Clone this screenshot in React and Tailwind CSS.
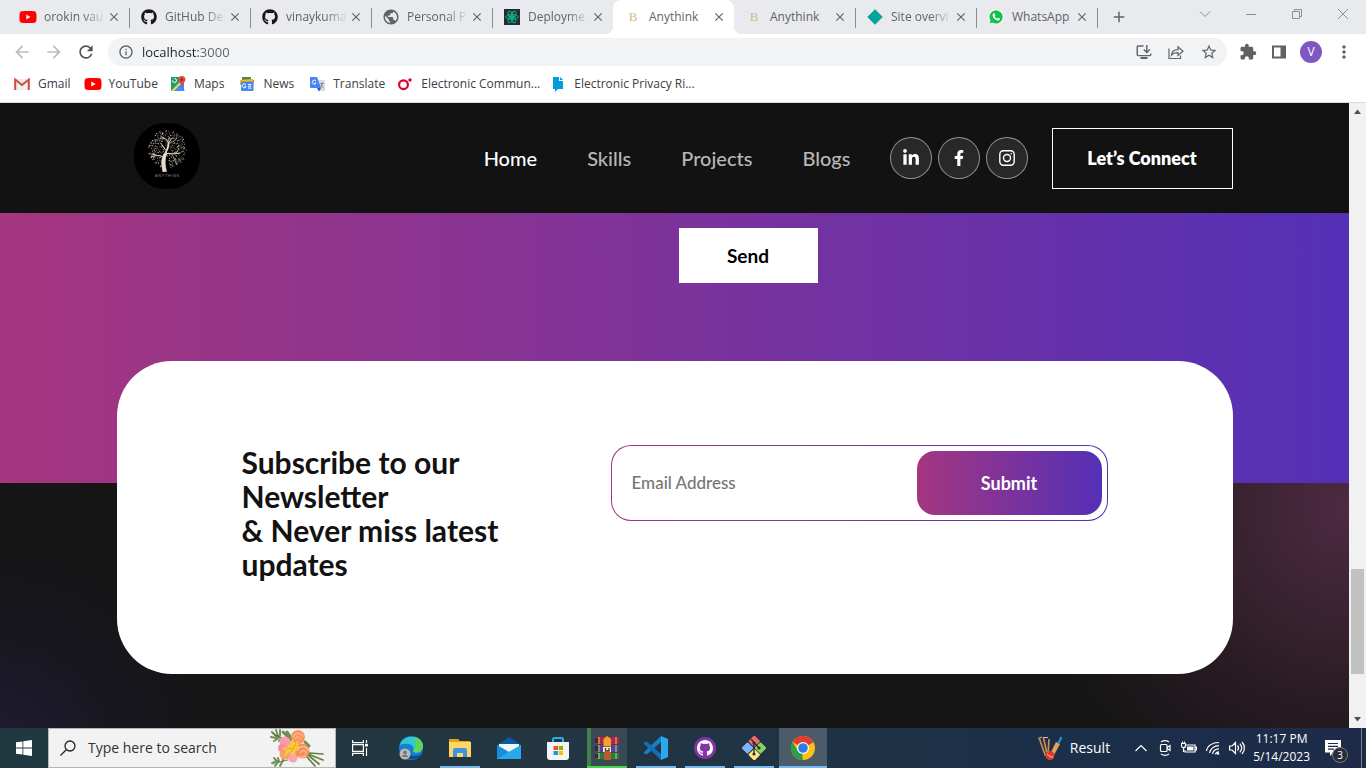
import React from "react";
import { FaYoutube, FaGithub, FaFacebookF, FaLinkedinIn, FaWhatsapp } from "react-icons/fa";
import { MdArrowBack, MdArrowForward, MdRefresh, MdInfoOutline, MdPublic, MdExtension, MdStarBorder, MdClose, MdAdd, MdMoreVert } from "react-icons/md";

const YouTube = () => <FaYoutube className="size-[18px] shrink-0 text-[#ff0000]" />;
const Octocat = () => <FaGithub className="size-4 text-[#191717]" />;
const Globe = () => <MdPublic className="size-[18px] shrink-0 text-[#5f6368]" />;

const ReactAtom = () => (
  <svg viewBox="0 0 16 16" className="size-4" fill="none" stroke="#10b585" strokeWidth="0.9">
    <rect width="16" height="16" fill="#222b38" stroke="none" />
    <ellipse cx="8" cy="8" rx="6.4" ry="2.5" />
    <ellipse cx="8" cy="8" rx="6.4" ry="2.5" transform="rotate(60 8 8)" />
    <ellipse cx="8" cy="8" rx="6.4" ry="2.5" transform="rotate(120 8 8)" />
    <circle cx="8" cy="8" r="1.5" fill="#10b585" />
  </svg>
);
const LetterB = () => <span className="w-4 text-center font-['Liberation_Serif',serif] text-[13px] leading-4 text-[#d6b98c]">B</span>;
const Diamond = () => (
  <svg viewBox="0 0 16 16" className="size-4"><path d="M8 .3 15.7 8 8 15.7.3 8z" fill="#05a39c" /></svg>
);
const WhatsApp = () => (
  <svg viewBox="0 0 16 16" className="size-4">
    <path d="M.3 15.700 1.400 11.700A7.600 7.600 0 1 1 4.300 14.600z" fill="#fff" />
    <path d="M1.500 14.500 2.400 11.400A6.600 6.600 0 1 1 4.600 13.600z" fill="#10c34b" />
    <path d="M5.600 4.400c.4-.3.900-.2 1.100.2l.6 1.400c.1.300 0 .5-.7 1.200.6 1.200 1.400 1.900 2.600 2.400.6-.8.800-1 1.100-.9l1.500.7c.3.200.3.500.2.900-.4 1.100-1.700 1.400-2.700 1.100C7 10.600 5.400 9 4.700 7c-.4-1.100.100-2.200.9-2.600z" fill="#fff" />
  </svg>
);

const tabs = [
  { title: "orokin vau", icon: YouTube, sep: true, fade: true },
  { title: "GitHub De", icon: Octocat, sep: true, fade: true },
  { title: "vinaykuma", icon: Octocat, sep: true, fade: true },
  { title: "Personal P", icon: Globe, sep: true, fade: true },
  { title: "Deployme", icon: ReactAtom, fade: true },
  { title: "Anythink", icon: LetterB, active: true },
  { title: "Anythink", icon: LetterB, sep: true },
  { title: "Site overvi", icon: Diamond, sep: true, fade: true },
  { title: "WhatsApp", icon: WhatsApp, sep: true },
];

function Tab({ title, icon: Icon, active, sep, fade }) {
  return (
    <div className={`relative flex h-[34px] w-[121px] min-w-0 items-center pl-3 pr-2 ${active ? "rounded-t-lg bg-white" : ""}`}>
      {active && <span className="absolute -left-2 bottom-0 size-2 bg-[radial-gradient(circle_at_0_0,transparent_8px,#fff_8px)]" />}
      {active && <span className="absolute -right-2 bottom-0 size-2 bg-[radial-gradient(circle_at_100%_0,transparent_8px,#fff_8px)]" />}
      <button className="flex min-w-0 flex-1 items-center gap-2 text-left">
        <span className="flex size-4 shrink-0 items-center justify-center"><Icon /></span>
        <span className={`min-w-0 flex-1 whitespace-nowrap text-[12px] leading-4 text-[#5f6368] ${fade ? "[mask-image:linear-gradient(90deg,#000_62%,transparent_98%)]" : ""}`}>{title}</span>
      </button>
      <button aria-label={`Close ${title}`} className="flex size-[14px] shrink-0 items-center justify-center"><MdClose className="size-[14px] text-[#5f6368]" /></button>
      {sep && <span className="absolute -right-px top-2 h-5 w-px bg-[#8a8d91]" />}
    </div>
  );
}

const line = { fill: "none", stroke: "#8f9195", strokeWidth: 1 };

function TabStrip() {
  return (
    <div className="flex h-[34px] items-start bg-[#e8eaed] pl-2">
      {tabs.map((t, i) => <Tab key={i} {...t} />)}
      <button aria-label="New tab" className="flex h-[34px] w-11 items-center justify-center"><MdAdd className="size-[18px] text-[#5f6368]" /></button>
      <div className="ml-auto flex">
        <button aria-label="Search tabs" className="flex h-7 w-[46px] items-center justify-center"><svg {...line} className="h-3 w-3" viewBox="0 0 12 12"><path d="m1 3.5 5 5 5-5" /></svg></button>
        <button aria-label="Minimize" className="flex h-7 w-[46px] items-center justify-center"><svg {...line} className="h-3 w-3" viewBox="0 0 12 12"><path d="M1 6.5h10" /></svg></button>
        <button aria-label="Restore" className="flex h-7 w-[46px] items-center justify-center"><svg {...line} className="h-3 w-3" viewBox="0 0 12 12"><path d="M1.500 3.500h7v7h-7zM3.500 3.500v-2h7v7h-2" /></svg></button>
        <button aria-label="Close window" className="flex h-7 w-[46px] items-center justify-center"><svg {...line} className="h-3 w-3" viewBox="0 0 12 12"><path d="m1 1 10 10M11 1 1 11" /></svg></button>
      </div>
    </div>
  );
}

function Toolbar() {
  const grey = { fill: "none", stroke: "#5f6368", strokeWidth: 1.4 };
  return (
    <div className="flex h-9 items-center bg-white pl-3 pr-3">
      <button aria-label="Back" className="w-8"><MdArrowBack className="size-5 text-[#b9bcbf]" /></button>
      <button aria-label="Forward" className="w-8"><MdArrowForward className="size-5 text-[#b9bcbf]" /></button>
      <button aria-label="Reload" className="w-8"><MdRefresh className="size-5 text-[#505458]" /></button>
      <div className="flex h-7 flex-1 items-center rounded-full bg-[#f1f3f4] pl-[10px] pr-[9px]">
        <MdInfoOutline className="size-4 text-[#5f6368]" />
        <input aria-label="Address" defaultValue="localhost:3000" className="ml-2 min-w-0 flex-1 bg-[linear-gradient(90deg,#202124_56px,#5f6368_56px)] bg-clip-text text-[13px] leading-5 text-transparent outline-none" />
        <div className="flex gap-4">
          <button aria-label="Install app">
            <svg {...grey} className="size-4" viewBox="0 0 16 16"><path d="M7.500 2H2.200a1 1 0 0 0-1 1v7.600a1 1 0 0 0 1 1h11.600a1 1 0 0 0 1-1V9.500M10.800 1v7.200M7.800 5.500l3 3 3-3" /><path d="M4.500 14h7" strokeWidth="2" /></svg>
          </button>
          <button aria-label="Share">
            <svg {...grey} strokeWidth="1.200" className="size-4" viewBox="0 0 16 16"><path d="M1 4.500v10h11.500v-3M3.500 11c.4-3.600 2.500-5.200 6.500-5.300V2.800L15 7.300l-5 4.200V8.700C7 8.600 5 9.200 3.500 11z" /></svg>
          </button>
          <button aria-label="Bookmark"><MdStarBorder className="size-[18px] text-[#5f6368]" /></button>
        </div>
      </div>
      <div className="flex items-center pl-3">
        <button aria-label="Extensions" className="w-8"><MdExtension className="size-[18px] text-[#5f6368]" /></button>
        <button aria-label="Side panel" className="w-[29px]">
          <svg viewBox="0 0 16 16" className="size-4"><path d="M2 2.500h12v11H2z" fill="none" stroke="#5f6368" strokeWidth="2" /><path d="M9.500 2h5v12h-5z" fill="#5f6368" /></svg>
        </button>
        <button aria-label="Profile" className="size-[22px] rounded-full bg-[#7e57c2] text-[12px] leading-[22px] text-white">V</button>
        <button aria-label="Menu" className="ml-3"><MdMoreVert className="size-5 text-[#5f6368]" /></button>
      </div>
    </div>
  );
}

const bookmarks = [
  { label: "Gmail", gap: "mr-[14px]", icon: <svg viewBox="0 0 16 16" className="size-4"><path d="M0 3h16v11H0z" fill="#eee" /><path d="M1.200 14V3.500L8 9l6.800-5.500V14" fill="none" stroke="#d54b3d" strokeWidth="2" /></svg> },
  { label: "YouTube", gap: "mr-3", icon: <YouTube /> },
  { label: "Maps", gap: "mr-[15px]", icon: <svg viewBox="0 0 16 16" className="size-4"><path d="M1 1h13v14H1z" fill="#4285f4" /><path d="M1 1h13L1 15z" fill="#1ea362" /><path d="m1 15 13-13v3L4 15z" fill="#fbd35a" /><path d="m5 15 5-5 5 5z" fill="#4a8af4" /><path d="M2.500 4.500a2 2 0 1 0 2-2" fill="none" stroke="#fff" /><path d="M11.800 0A3.600 3.600 0 0 0 8.200 3.600C8.200 6.500 11 7 11.800 10.500 12.600 7 15.400 6.500 15.400 3.600A3.600 3.600 0 0 0 11.800 0z" fill="#de4a3c" /><circle cx="11.800" cy="3.600" r="1.200" fill="#7d241c" /></svg> },
  { label: "News", gap: "mr-[15px]", icon: <svg viewBox="0 0 16 16" className="size-4"><path d="M3 1h9v5H3z" fill="#1aa260" /><path d="m5 2 10 2-1 5H4z" fill="#ea4335" /><path d="m1 4 13-1v6H1z" fill="#fbbc04" /><rect x="2" y="5.500" width="12.500" height="9.500" rx="1" fill="#4285f4" /><path d="M6.800 8.700a2 2 0 1 0 .3 1.700H5.400M9 8.500h3.500M9 10.300h3M9 12.100h3.500" fill="none" stroke="#fff" /></svg> },
  { label: "Translate", gap: "mr-3", icon: <svg viewBox="0 0 16 16" className="size-4"><path d="M7 4h8a1 1 0 0 1 1 1v10H9z" fill="#dcdcdc" /><path d="M1 1h7l4 11H2a1 1 0 0 1-1-1z" fill="#4285f4" /><path d="m8 12 4 0-2 3.500z" fill="#2a56c6" /><path d="M7 5.200A2 2 0 1 0 7.100 7H5.400" fill="none" stroke="#fff" /><path d="M11.300 7.500h3.500M13 6.500v1c0 2-.8 3-1.500 4M12 9c.4 1.200 1.200 2.200 2.300 2.800" fill="none" stroke="#607988" strokeWidth=".9" /></svg> },
  { label: "Electronic Commun...", gap: "mr-[10px]", icon: <svg viewBox="0 0 16 16" className="size-4"><circle cx="6.500" cy="8.700" r="4.400" fill="none" stroke="#dc0032" strokeWidth="2.200" /><circle cx="13" cy="4" r="1.700" fill="#dc0032" /></svg> },
  { label: "Electronic Privacy Ri...", gap: "", icon: <svg viewBox="0 0 16 16" className="size-4"><path d="M3 1h6v4h4v8H8l-3 2.700V13H3z" fill="#009cde" /><path d="M10 1v3h3z" fill="#009cde" /></svg> },
];

function Bookmarks() {
  return (
    <nav aria-label="Bookmarks" className="flex h-[33px] items-start border-b border-[#dadce0] bg-white pl-[14px] pt-[6px]">
      {bookmarks.map((b) => (
        <a key={b.label} href="#" className={`flex items-center gap-2 whitespace-nowrap text-[12px] leading-4 text-[#3c4043] ${b.gap}`}>
          <span className="flex size-4 shrink-0 items-center justify-center">{b.icon}</span><span>{b.label}</span>
        </a>
      ))}
    </nav>
  );
}

const noise = (n) => {
  const v = Math.sin(n * 12.9898) * 43758.5453;
  return v - Math.floor(v);
};
const leaves = Array.from({ length: 400 }, (_, i) => {
  const r = 19 * Math.sqrt((i + 12) / 412);
  const a = i * 2.39996 + noise(i) * 0.5;
  return { x: 33.5 + r * Math.cos(a), y: 26 + r * Math.sin(a), o: 0.3 + noise(i + 7) * 0.6, s: 0.4 + noise(i + 31) * 0.3, i };
}).filter((d) => noise(d.i + 90) > 0.12 && !(d.y > 34 && Math.abs(d.x - 31) < 4));

function TreeLogo() {
  return (
    <svg viewBox="0 0 66 66" className="size-[66px]" role="img" aria-label="Anythink">
      <rect width="66" height="66" rx="31" fill="#000" />
      {leaves.map((d) => <circle key={d.i} cx={d.x} cy={d.y} r={d.s} fill="#e6dccb" opacity={d.o} />)}
      <g fill="none" stroke="#e9decd" strokeLinecap="round">
        <path d="M29 48.500h3.500c-1.500-7-2-12 .3-17.500l-2.800-.5c-3 6-3 11-1 18z" fill="#e9decd" strokeWidth=".6" />
        <path d="M31 33c.5-6 4-7 3.500-13" strokeWidth="1.800" />
        <path d="M34.500 21c0-4 3-4 4-6M34 19c-1-3-4-4-6-5M31.500 30.500c6 0 9 1 14-.5M28.500 33.500c-4-2-6 0-10-2.500M31.500 27c-2-3-3-5-5-7" strokeWidth="1" />
        <path d="M40 31c3-2 4-3 5-6M37 31c2 2 3 3 4 7M22 32c-2 0-4 1-5 2M35 20c3-1 5-1 7-4" strokeWidth=".6" />
      </g>
      <text x="33.500" y="54" textAnchor="middle" fontSize="4" letterSpacing="0.600" fill="#8f897f" fontFamily="Liberation Sans, sans-serif">ANYTHINK</text>
    </svg>
  );
}

const Insta = () => (
  <svg viewBox="0 0 16 16" className="size-4" fill="none" stroke="#fff" strokeWidth="1.400"><rect x=".8" y=".8" width="14.400" height="14.400" rx="3.600" /><circle cx="8" cy="8" r="3.500" /><circle cx="12.200" cy="3.800" r=".8" fill="#fff" stroke="none" /></svg>
);

function SiteHeader() {
  const links = ["Home", "Skills", "Projects", "Blogs"];
  const social = [
    { name: "LinkedIn", icon: <FaLinkedinIn className="size-[18px]" /> },
    { name: "Facebook", icon: <FaFacebookF className="size-4" /> },
    { name: "Instagram", icon: <Insta /> },
  ];
  return (
    <header className="bg-[#121212]">
      <div className="mx-auto flex h-[110px] max-w-[1140px] items-center px-3">
        <a href="#" className="-mt-1 ml-[17px]"><TreeLogo /></a>
        <nav className="ml-auto flex gap-[50px] text-[20px] leading-6 font-medium">
          {links.map((l, i) => <a key={l} href="#" className={i === 0 ? "text-white" : "text-[#b8b8b8]"}>{l}</a>)}
        </nav>
        <div className="ml-[39px] flex gap-[6px]">
          {social.map((s) => (
            <a key={s.name} href="#" aria-label={s.name} className="flex size-[42px] items-center justify-center rounded-full border border-white/50 bg-[#282828] text-white">{s.icon}</a>
          ))}
        </div>
        <button className="ml-6 h-[61px] w-[181px] border border-white text-[18px] leading-6 font-extrabold text-white">Let’s Connect</button>
      </div>
    </header>
  );
}

const brand = "bg-[linear-gradient(90deg,#aa367c_-6%,#4a2fbd_112%)]";

function Page() {
  return (
    <main className="flex min-w-0 flex-1 flex-col font-[Lato,sans-serif]">
      <SiteHeader />
      <section className={`h-[270px] shrink-0 ${brand}`}>
        <div className="mx-auto grid max-w-[1140px] grid-cols-2 pt-[15px]">
          <div className="col-start-2 pl-1">
            <button className="h-[55px] w-[139px] bg-white text-[19px] leading-6 font-bold text-black">Send</button>
          </div>
        </div>
      </section>
      <section className="flex-1 bg-[#151515] bg-[radial-gradient(circle_at_100%_10%,#4e2a42_0,#38222f_120px,#281b22_200px,#1b171a_280px,transparent_340px),radial-gradient(circle_at_0%_110%,#201c33_0,#181720_110px,transparent_220px)] pb-[54px]">
        <div className="mx-auto max-w-[1140px] px-3">
          <div className="relative -mt-[122px] grid grid-cols-[5fr_7fr] gap-x-[14px] rounded-[55px] bg-white px-[125px] pb-[93px] pt-[84px]">
            <h3 className="max-w-[290px] text-[30px] leading-[34px] font-bold text-[#121212]">Subscribe to our Newsletter<br />&amp; Never miss latest updates</h3>
            <form className={`h-[76px] rounded-[20px] p-px ${brand}`} onSubmit={(e) => e.preventDefault()}>
              <div className="flex h-full items-center rounded-[19px] bg-white p-[5px] pl-5">
                <input type="email" aria-label="Email Address" placeholder="Email Address" className="min-w-0 flex-1 text-[17px] leading-6 font-medium outline-none placeholder:text-[#757575]" />
                <button className={`h-full w-[185px] rounded-[18px] text-[18px] leading-6 font-bold text-white ${brand}`}>Submit</button>
              </div>
            </form>
          </div>
        </div>
      </section>
    </main>
  );
}

function Scrollbar() {
  return (
    <div aria-hidden="true" className="flex w-[17px] shrink-0 flex-col items-center bg-[#f1f1f1]">
      <svg viewBox="0 0 17 17" className="size-[17px]"><path d="M8.500 6.500 12 11H5z" fill="#505050" /></svg>
      <div className="flex-[449]" />
      <div className="h-[105px] w-[13px] bg-[#c1c1c1]" />
      <div className="flex-[37]" />
      <svg viewBox="0 0 17 17" className="size-[17px]"><path d="M8.500 10.500 5 6h7z" fill="#505050" /></svg>
    </div>
  );
}

const Flowers = () => (
  <svg viewBox="0 0 56 38" className="h-[38px] w-14">
    <g stroke="#6f8f55" strokeWidth="1.900" strokeLinecap="round">
      <path d="M1 8l5 1M2 3l5 5M6 1l2 6M10 1l0 6M4 12l5-3M9 12l4-3M2 34l4-2M4 29l3 3M8 29l1 3M5 37l3-4M10 37l2-4M13 28l0 4" />
      <path d="M2 4c5 4 9 5 14 7M3 35c5-2 9-3 15-4" strokeWidth="1" />
      <path d="M38 26l11 9M38 25l15 6M39 24l14 1M37 28l8 9" strokeWidth="1.700" stroke="#667f42" />
      <path d="M17 3l5 7M35 13l4 4M13 3l8 8" strokeWidth="3" />
    </g>
    <circle cx="15" cy="13" r="5.500" fill="#f79aae" /><circle cx="12" cy="19" r="4" fill="#f48aa5" /><circle cx="23" cy="29" r="4.500" fill="#f9a3b5" />
    <circle cx="28" cy="8" r="7" fill="#f7955f" /><path d="M23 8c2-5 9-4 10 0M25 10c2-3 5-2 6 0" stroke="#fbb78c" fill="none" strokeWidth="1.500" />
    <circle cx="32" cy="22" r="7.500" fill="#f58d58" /><path d="M27 22c2-6 10-6 11 0M30 24c2-4 6-3 6 1M28 27c3 2 6 1 8-1" stroke="#fbb78c" fill="none" strokeWidth="1.500" />
    <circle cx="15" cy="25" r="5.500" fill="#f9a06a" />
    <path d="M23 9l1 6 5-4-2 6 5 1-6 3-1 5-5-3-6 5 2-7-5-2 7-1z" fill="#f8c93b" /><path d="M16 19l7 1 3-6M20 25l3-5" stroke="#e5a41c" fill="none" />
  </svg>
);

const big = "size-6";
const apps = [
  { name: "Edge", bar: "", icon: <svg viewBox="0 0 24 24" className={big}><circle cx="12" cy="12" r="12" fill="#1280d4" /><path d="M1 9C4-2 22-2 24 10c0 7-8 8-10 5 3-7-7-9-13-6z" fill="#35c6cf" /><path d="M15 .500c6 1.500 9 5.500 9 9.500 0 7-8 8-10 5 4-5 3-10 1-14.500z" fill="#62d35c" /><path d="M8 12c0 7 7 10 14 6-3 5-9 7-14 4-4-3-4-8 0-10z" fill="#0c4d93" /><circle cx="6" cy="18" r="5.500" fill="#bcb8b6" /><circle cx="6" cy="16.500" r="1.900" fill="#777" /><path d="M2.800 21c.6-3 5.800-3 6.400 0z" fill="#777" /></svg> },
  { name: "File Explorer", bar: "border-[#76b9ed]", icon: <svg viewBox="0 0 24 24" className={big}><path d="M1 3h9l2 2h10v4H1z" fill="#e5a31a" /><path d="M1 6h22v15H1z" fill="#ffd766" /><path d="M5 21v-7a2 2 0 0 1 2-2h10a2 2 0 0 1 2 2v7h-4v-4H9v4z" fill="#3f95dd" /></svg> },
  { name: "Mail", bar: "", icon: <svg viewBox="0 0 24 24" className={big}><path d="M0 9 12 1l12 8v5H0z" fill="#0c59a4" /><path d="M2 8h20v8H2z" fill="#f1f5f8" /><path d="M0 9l12 7-12 7z" fill="#168ddd" /><path d="M24 9v14H0z" fill="#35b9f1" /><path d="M0 23 24 9v14z" fill="#29a9ea" /></svg> },
  { name: "Microsoft Store", bar: "", icon: <svg viewBox="0 0 24 24" className={big}><path d="M7 7V3.500A1.500 1.500 0 0 1 8.500 2h7A1.500 1.500 0 0 1 17 3.500V7" fill="none" stroke="#2db2e8" strokeWidth="2" /><path d="M1 6h22v15a3 3 0 0 1-3 3H4a3 3 0 0 1-3-3z" fill="#f4f4f4" /><path d="M7.500 10H12v4H7.500z" fill="#f25022" /><path d="M12.800 10H17v4h-4.200z" fill="#7fba00" /><path d="M7.500 15H12v4H7.500z" fill="#00a4ef" /><path d="M12.800 15H17v4h-4.200z" fill="#ffb900" /></svg> },
  { name: "WinRAR", bar: "border-[#43d843] bg-[linear-gradient(90deg,#43804b_4px,#ffffff1a_4px)]", icon: <svg viewBox="0 0 24 24" className="size-6 shrink-0"><rect y="1" width="24" height="7" rx="1" fill="#ba2147" /><rect y="9" width="24" height="7" rx="1" fill="#4a45a0" /><rect y="17" width="24" height="6" rx="1" fill="#218044" /><path d="M0 2h3v5H0zM0 10h3v5H0zM0 18h3v4H0z" fill="#2e2c38" /><path d="M4 1v7M4 9v7M4 17v6M21 1v7M21 9v7M21 17v6" stroke="#ddac4e" strokeWidth="1.200" /><path d="M9 8h7v16H9z" fill="#bf5a20" /><path d="M8.500 3l3.500-3 4 3v7H8.500z" fill="#f1a32c" /><path d="M8 11h8v5H8z" fill="#ece5dc" /><path d="M10.500 12v3h3.500v-3" stroke="#6a3517" strokeWidth="1.300" fill="none" /></svg> },
  { name: "Visual Studio Code", bar: "border-[#76b9ed]", icon: <svg viewBox="0 0 24 24" className={big}><path d="M17 0l7 3v18l-7 3z" fill="#2ba7ee" /><path d="M17 0v6L4 17.500 1.500 18.500 0 17v-1z" fill="#1580c8" /><path d="M17 24v-6L4 6.500 1.500 5.500 0 7v1z" fill="#0e70b9" /></svg> },
  { name: "GitHub Desktop", bar: "border-[#76b9ed]", icon: <span className="flex size-[22px] items-center justify-center rounded-full bg-[#8534a5]"><svg viewBox="0 0 16 16" className="size-4"><path d="M8 0C3.600 0 0 3.600 0 8c0 3.500 2.300 6.500 5.500 7.600.4.100.5-.2.500-.4v-1.500c-2.200.5-2.700-.9-2.700-.9-.4-.9-.9-1.200-.9-1.200-.7-.5.100-.5.100-.5.8.1 1.200.8 1.200.8.7 1.200 1.900.9 2.300.7.100-.5.300-.9.500-1.100-1.800-.2-3.600-.9-3.600-4 0-.9.300-1.600.8-2.100-.1-.2-.4-1 .1-2.100 0 0 .7-.2 2.200.8a7.500 7.500 0 0 1 4 0c1.500-1 2.200-.8 2.200-.8.400 1.100.2 1.900.1 2.100.5.500.8 1.200.8 2.100 0 3.100-1.900 3.800-3.700 4 .3.200.6.700.6 1.500v2.200c0 .2.100.5.500.4A8 8 0 0 0 16 8c0-4.400-3.600-8-8-8z" fill="#fff" /></svg></span> },
  { name: "Git", bar: "border-[#76b9ed]", icon: <svg viewBox="0 0 24 24" className={big}><g><rect x="8" y="1" width="8.500" height="8.500" rx="1" transform="rotate(45 12.250 5.250)" fill="#ef6b6b" /><rect x="1.300" y="7.800" width="8.500" height="8.500" rx="1" transform="rotate(45 5.500 12)" fill="#80b3ff" /><rect x="14.300" y="7.800" width="8.500" height="8.500" rx="1" transform="rotate(45 18.500 12)" fill="#8dd35f" /><rect x="8" y="14.500" width="8.500" height="8.500" rx="1" transform="rotate(45 12.250 18.750)" fill="#ffe680" /></g><path d="M9 3l8 9M12 7v12" stroke="#2b2f36" strokeWidth="1.300" /><circle cx="12" cy="7" r="1.600" fill="#2b2f36" /><circle cx="17" cy="12" r="1.600" fill="#2b2f36" /><circle cx="12" cy="18" r="1.600" fill="#2b2f36" /></svg> },
];

function Taskbar() {
  const w = { fill: "none", stroke: "#fff", strokeWidth: 1.2 };
  return (
    <footer className="flex h-10 items-stretch bg-[linear-gradient(90deg,#20383f,#233642_40%,#1b3048_75%,#1d2b49)] text-white">
      <button aria-label="Start" className="flex w-12 items-center justify-center">
        <svg viewBox="0 0 16 16" className="size-4"><path d="M0 2.300 6.500 1.400v6.200H0zM7.300 1.300 16 0v7.600H7.300zM0 8.400h6.500v6.200L0 13.700zM7.300 8.400H16V16l-8.700-1.200z" fill="#fff" /></svg>
      </button>
      <label className="flex w-72 items-center border border-[#b5b5b5] bg-[#f2f2f2] pl-[11px] pr-[9px]">
        <svg viewBox="0 0 16 16" className="size-4" fill="none" stroke="#222" strokeWidth="1.300"><circle cx="10" cy="6" r="5" /><path d="m6.500 9.500-6 6" /></svg>
        <input aria-label="Type here to search" placeholder="Type here to search" className="ml-3 min-w-0 flex-1 text-[14px] leading-5 outline-none placeholder:text-[#333]" />
        <Flowers />
      </label>
      <button aria-label="Task view" className="mr-[7px] flex w-12 items-center justify-center">
        <svg {...w} viewBox="0 0 16 16" className="size-4"><path d="M.6 0v2.600h10.800V0M.6 16v-2.600h10.800V16M.6 4.600h10.800v6.800H.6zM14.500 0v3M14.500 8v8" /><path d="M13 3.800h3v2.700h-3z" fill="#fff" stroke="none" /></svg>
      </button>
      <div className="flex gap-[9px]">
        {apps.map((a) => (
          <button key={a.name} aria-label={a.name} className={`flex w-10 items-center justify-center border-b-2 pt-px ${a.bar || "border-transparent"}`}>{a.icon}</button>
        ))}
      </div>
      <button aria-label="Chrome" className="ml-[5px] flex w-12 items-center justify-center border-b-2 border-[#76b9ed] bg-white/20 pt-px">
        <svg viewBox="0 0 24 24" className={big}><circle cx="12" cy="12" r="12" fill="#fbc116" /><path d="M1.600 6A12 12 0 0 1 22.400 6L12 12z" fill="#e33b2e" /><path d="M12 6h10.400L12 12z" fill="#e33b2e" /><path d="M1.600 6 6.800 15 12 17.500 12 24A12 12 0 0 1 1.600 6z" fill="#289e4b" /><path d="m17.200 15-5.200 9-1-5z" fill="#fbc116" /><circle cx="12" cy="12" r="6" fill="#fff" /><circle cx="12" cy="12" r="4.800" fill="#3479e8" /></svg>
      </button>
      <div className="ml-auto flex items-center">
        <button className="mr-[23px] flex items-center gap-2 text-[14px] leading-5">
          <svg viewBox="0 0 24 24" className="size-6"><path d="M1.500 3l6 17M5.500 2l4 18M11 3l-1 17" stroke="#c88d52" strokeWidth="1.700" /><path d="M0 2.500l4-1.500M5 1.500h5" stroke="#e6c399" /><path d="m18 6-7 14 4 1 7-13z" fill="#dfa35b" /><path d="m20.500 7 3-6" stroke="#2196dd" strokeWidth="2" /><circle cx="12" cy="19.500" r="4.500" fill="#e23a2e" /><path d="M9 18c2 2 4 3 6 3" stroke="#fff" strokeWidth=".7" fill="none" /></svg>
          Result
        </button>
        <div className="flex items-center gap-2">
          <button aria-label="Show hidden icons"><svg {...w} viewBox="0 0 16 16" className="size-4"><path d="m2.500 11 5.500-5.500 5.500 5.500" /></svg></button>
          <button aria-label="Meet now"><svg {...w} viewBox="0 0 16 16" className="size-4"><rect x="3.500" y="4.500" width="6.500" height="7" rx="1" /><path d="m10 7.500 3-2v5l-3-2M4 2c2.500-1.600 5.500-1.600 8 0M4 14c2.500 1.600 5.500 1.600 8 0" /></svg></button>
          <button aria-label="Battery"><svg {...w} viewBox="0 0 16 16" className="size-4"><path d="M5 5h9v7H4v-2M14.500 7h1v3h-1" /><path d="M6 6.500h6.500v4H6z" fill="#fff" stroke="none" /><path d="M.5 3.500h4v2.200a2 2 0 0 1-4 0zM1.500 1.500v2M3.500 1.500v2M2.500 8v4" /></svg></button>
          <button aria-label="Network"><svg {...w} viewBox="0 0 16 16" className="size-4"><path d="M1.500 11C2 6 7 2.500 14 2.500M4.500 13C5 9 9 5.800 14 5.700M7.500 14c.5-3 3-5 6.500-5.100M10.500 14.500c.3-1.500 1.500-2.500 3.500-2.600" /><circle cx="13" cy="13.500" r="1.300" fill="#fff" stroke="none" /></svg></button>
          <button aria-label="Volume"><svg {...w} viewBox="0 0 16 16" className="size-4"><path d="M.6 6h2.500L6.500 2.500v11L3.100 10H.6zM8.500 5.500c1.300 1.500 1.300 3.500 0 5M10.800 3.700c2.300 2.600 2.300 6 0 8.600M13 2c3.200 3.500 3.200 8.500 0 12" /></svg></button>
        </div>
        <time className="ml-2 whitespace-nowrap text-center text-[12px] leading-[18px]"><span className="flex justify-center">11:17 PM</span><span className="flex justify-center">5/14/2023</span></time>
        <button aria-label="3 notifications" className="relative ml-[15px] mr-5">
          <svg viewBox="0 0 16 16" className="size-4"><path d="M0 0h16v12.500H8.500L5 16v-3.500H0z" fill="#fff" /><path d="M3 3.500h10M3 6.300h10M3 9.100h6" stroke="#1d2b49" strokeWidth="1.200" /></svg>
          <span className="absolute left-[7px] top-[7px] flex size-4 items-center justify-center rounded-full border border-[#777b83] bg-[#2a2d35] text-[10px] leading-3">3</span>
        </button>
        <span className="mr-1 h-full w-px bg-white/40" />
      </div>
    </footer>
  );
}

export default function App() {
  return (
    <div className="flex min-h-screen flex-col font-['Open_Sans','Noto_Sans',sans-serif]">
      <TabStrip />
      <Toolbar />
      <Bookmarks />
      <div className="flex flex-1">
        <Page />
        <Scrollbar />
      </div>
      <Taskbar />
    </div>
  );
}
